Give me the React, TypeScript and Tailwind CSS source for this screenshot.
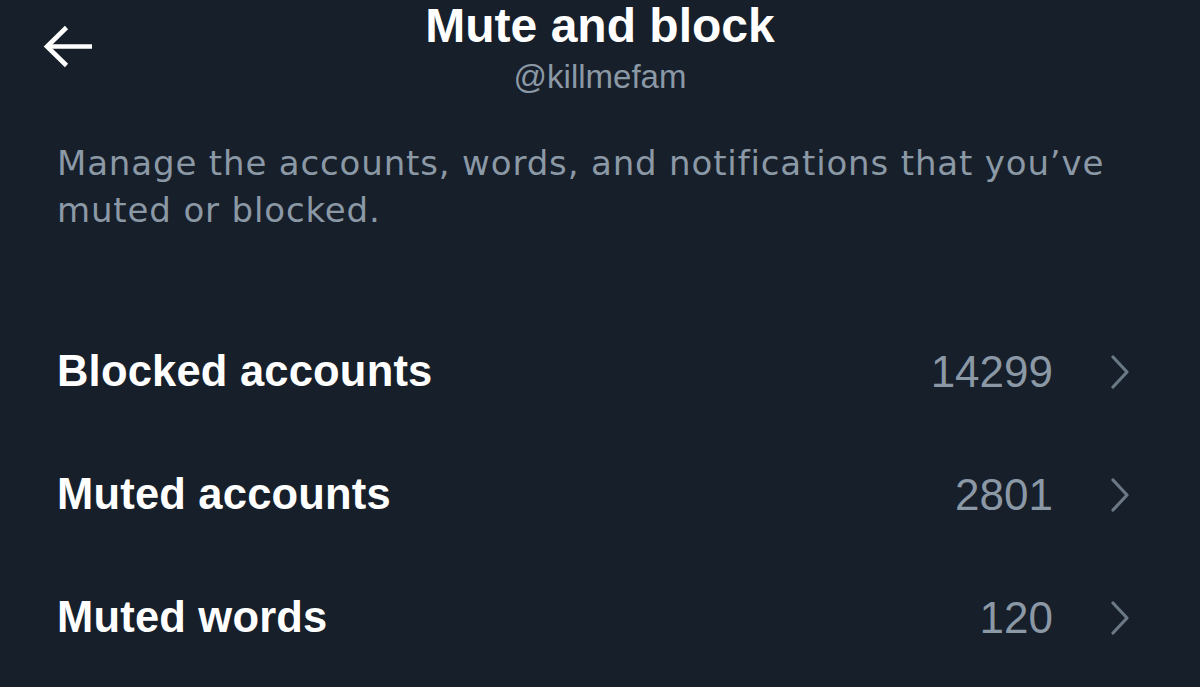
const rows = [
	{ label: "Blocked accounts", count: "14299" },
	{ label: "Muted accounts", count: "2801" },
	{ label: "Muted words", count: "120" },
];

const BackArrow = () => (
	<svg width="50" height="43" viewBox="0 0 50 43" fill="none" stroke="white" strokeWidth="4.6">
		<path d="M4 21.5H49" />
		<path d="M23.5 2.5L4 21.5L23.5 40.5" />
	</svg>
);

const Chevron = () => (
	<svg width="20" height="34" viewBox="0 0 20 34" fill="none" stroke="#6b7886" strokeWidth="3.2" strokeLinecap="round" strokeLinejoin="round">
		<path d="M3 2L17 17L3 32" />
	</svg>
);

export default function App() {
	return (
		<div className="h-[687px] w-[1200px] overflow-hidden bg-[#171f2a] font-['Liberation_Sans',Arial,sans-serif]">
			<header className="grid grid-cols-[1fr_auto_1fr]">
				<div className="pl-[43px] pt-[25px]">
					<BackArrow />
				</div>
				<div className="flex flex-col items-center">
					<h1 className="pt-[2px] text-[48px] font-bold leading-[48px] text-white">Mute and block</h1>
					<div className="mt-[10px] text-[33px] leading-[33px] text-[#8b98a5]">@killmefam</div>
				</div>
				<div />
			</header>

			<p className="mt-[47px] px-[57px] font-['DejaVu_Sans',sans-serif] text-[34px] leading-[47px] tracking-[0.85px] text-[#8b98a5]">
				Manage the accounts, words, and notifications that you’ve muted or blocked.
			</p>

			<ul className="mt-[76px]">
				{rows.map((row) => (
					<li key={row.label} className="flex h-[123px] items-center pl-[57px] pr-[70px]">
						<span className="flex-1 text-[43.5px] font-bold leading-[43px] tracking-[0.2px] text-white">{row.label}</span>
						<span className="mr-[57px] text-[44px] leading-[44px] text-[#8b98a5]">{row.count}</span>
						<Chevron />
					</li>
				))}
			</ul>
		</div>
	);
}
